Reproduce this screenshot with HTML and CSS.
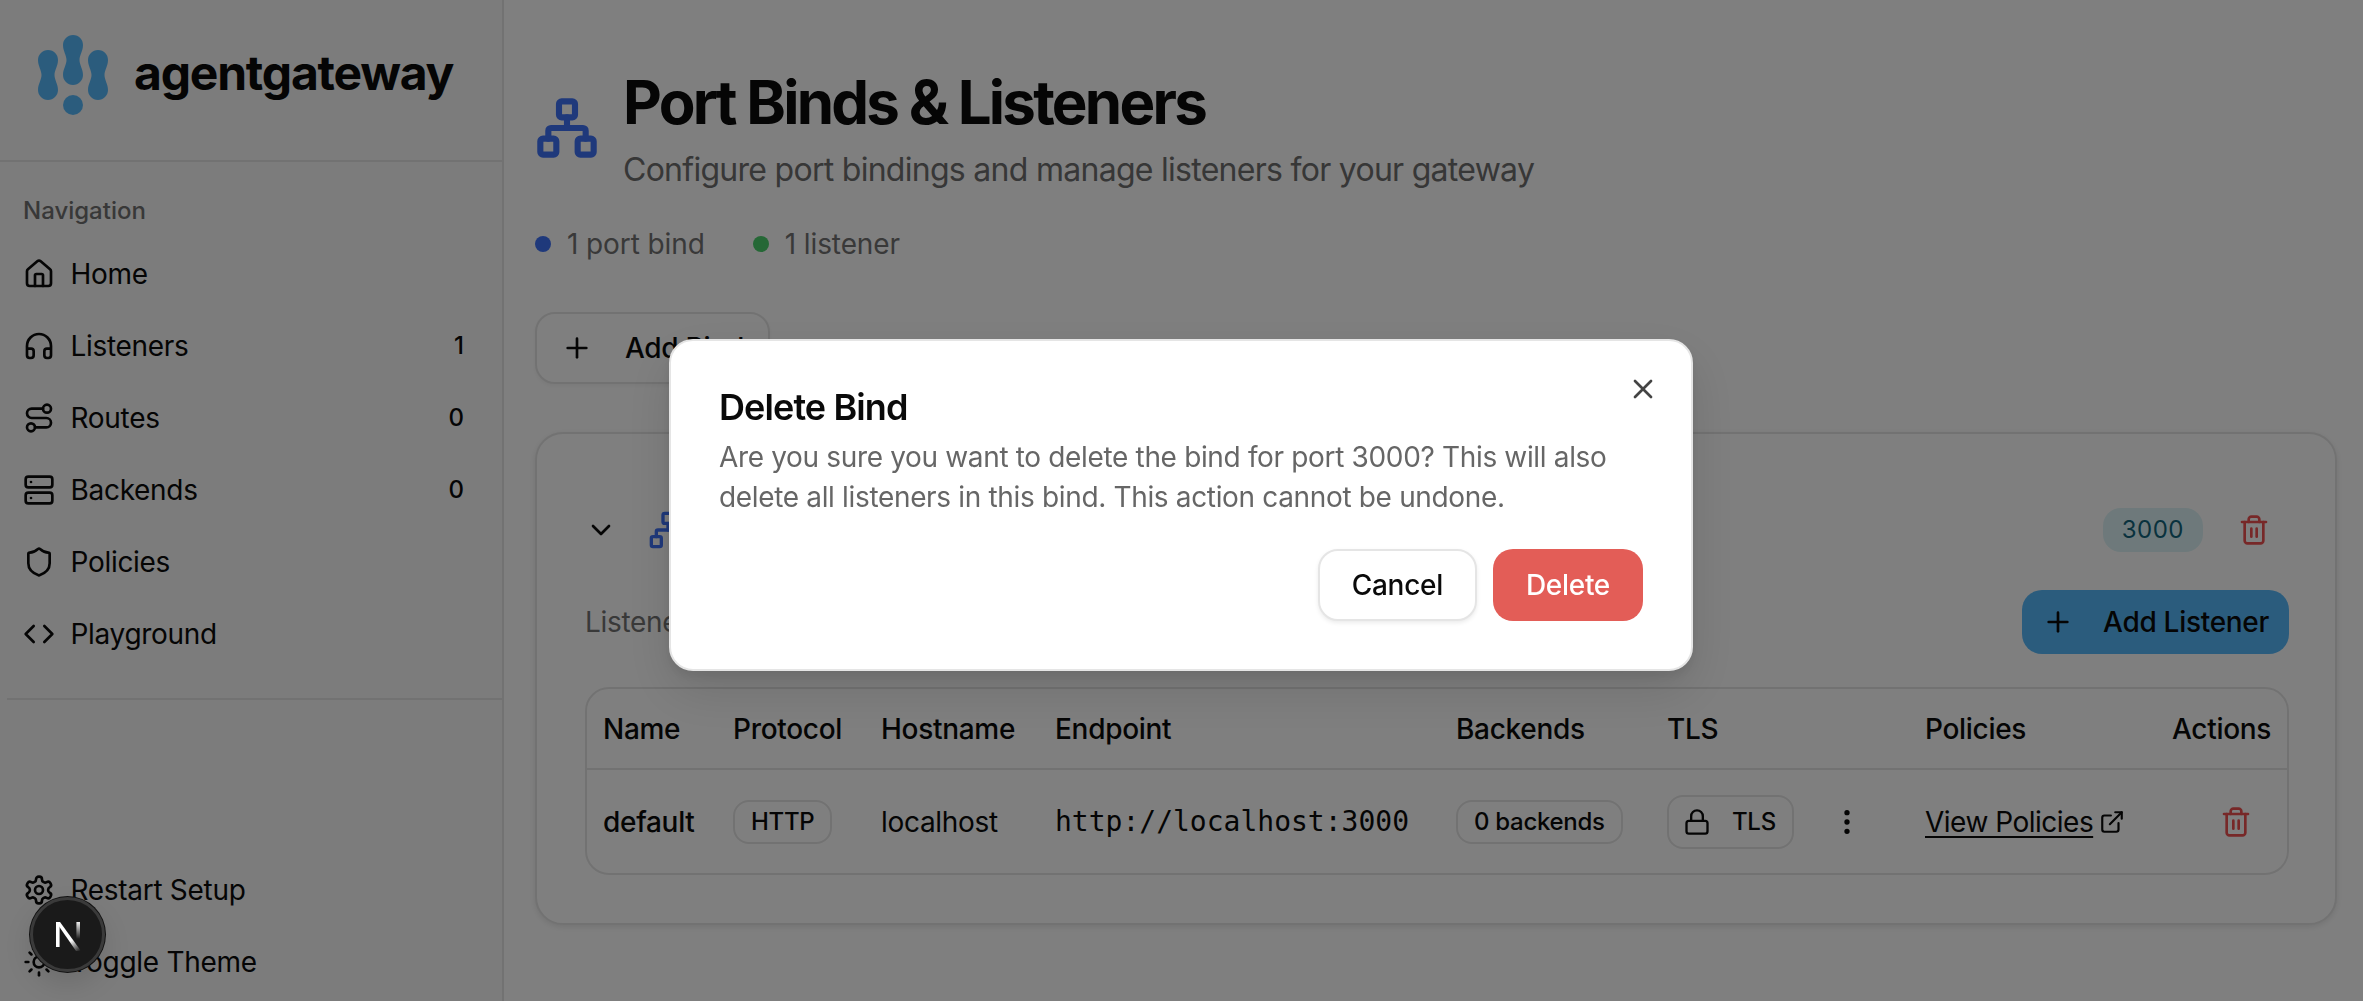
FILE: index.html
```html
<!DOCTYPE html>
<html lang="en">

<head>
  <meta charset="UTF-8">
  <meta name="viewport" content="width=device-width, initial-scale=1.0">
  <title>Port Binds &amp; Listeners</title>
  <link rel="stylesheet" href="styles.css">
</head>

<body>
  <aside class="sidebar">
    <div class="sidebar-header">
      <svg class="logo" viewBox="0 0 70 80" fill="#57b9fb">
        <path d="M10 15C16 15 20 19.500 20 25C20 31 16.500 35 16.500 40C16.500 45 20 49 20 55C20 60.500 15.500 65 10 65C4.500 65 0 60.500 0 55C0 49 3.500 45 3.500 40C3.500 35 0 31 0 25C0 19.500 4.500 15 10 15Z" />
        <path d="M35 0C41 0 45 4.500 45 10C45 16 41.500 20 41.500 25C41.500 30 45 34 45 40C45 45.500 40.500 50 35 50C29.500 50 25 45.500 25 40C25 34 28.500 30 28.500 25C28.500 20 25 16 25 10C25 4.500 29.500 0 35 0Z" />
        <path d="M60 15C66 15 70 19.500 70 25C70 31 66.500 35 66.500 40C66.500 45 70 49 70 55C70 60.500 65.500 65 60 65C54.500 65 50 60.500 50 55C50 49 53.500 45 53.500 40C53.500 35 50 31 50 25C50 19.500 54.500 15 60 15Z" />
        <circle cx="35" cy="70" r="10" />
      </svg>
      <span class="brand">agentgateway</span>
    </div>

    <div class="nav-group">
      <div class="nav-label">Navigation</div>
      <a class="nav-item">
        <svg class="icon" viewBox="0 0 24 24"><path d="M15 21v-8a1 1 0 0 0-1-1h-4a1 1 0 0 0-1 1v8" /><path d="M3 10a2 2 0 0 1 .709-1.528l7-5.999a2 2 0 0 1 2.582 0l7 5.999A2 2 0 0 1 21 10v9a2 2 0 0 1-2 2H5a2 2 0 0 1-2-2z" /></svg>
        <span>Home</span>
      </a>
      <a class="nav-item">
        <svg class="icon" viewBox="0 0 24 24"><path d="M3 14h3a2 2 0 0 1 2 2v3a2 2 0 0 1-2 2H5a2 2 0 0 1-2-2v-7a9 9 0 0 1 18 0v7a2 2 0 0 1-2 2h-1a2 2 0 0 1-2-2v-3a2 2 0 0 1 2-2h3" /></svg>
        <span>Listeners</span>
        <span class="nav-count">1</span>
      </a>
      <a class="nav-item">
        <svg class="icon" viewBox="0 0 24 24"><circle cx="6" cy="19" r="3" /><path d="M9 19h8.500a3.500 3.500 0 0 0 0-7h-11a3.500 3.500 0 0 1 0-7H15" /><circle cx="18" cy="5" r="3" /></svg>
        <span>Routes</span>
        <span class="nav-count">0</span>
      </a>
      <a class="nav-item">
        <svg class="icon" viewBox="0 0 24 24"><rect width="20" height="8" x="2" y="2" rx="2" ry="2" /><rect width="20" height="8" x="2" y="14" rx="2" ry="2" /><line x1="6" x2="6.010" y1="6" y2="6" /><line x1="6" x2="6.010" y1="18" y2="18" /></svg>
        <span>Backends</span>
        <span class="nav-count">0</span>
      </a>
      <a class="nav-item">
        <svg class="icon" viewBox="0 0 24 24"><path d="M20 13c0 5-3.500 7.500-7.660 8.950a1 1 0 0 1-.67-.01C7.500 20.500 4 18 4 13V6a1 1 0 0 1 1-1c2 0 4.500-1.200 6.240-2.720a1.170 1.170 0 0 1 1.520 0C14.510 3.810 17 5 19 5a1 1 0 0 1 1 1z" /></svg>
        <span>Policies</span>
      </a>
      <a class="nav-item">
        <svg class="icon" viewBox="0 0 24 24"><path d="m16 18 6-6-6-6" /><path d="m8 6-6 6 6 6" /></svg>
        <span>Playground</span>
      </a>
    </div>

    <div class="sidebar-rule"></div>

    <div class="sidebar-foot">
      <a class="nav-item">
        <svg class="icon" viewBox="0 0 24 24"><path d="M12.220 2h-.44a2 2 0 0 0-2 2v.18a2 2 0 0 1-1 1.730l-.43.25a2 2 0 0 1-2 0l-.15-.08a2 2 0 0 0-2.730.73l-.22.38a2 2 0 0 0 .73 2.730l.15.1a2 2 0 0 1 1 1.720v.51a2 2 0 0 1-1 1.740l-.15.09a2 2 0 0 0-.73 2.730l.22.38a2 2 0 0 0 2.730.73l.15-.08a2 2 0 0 1 2 0l.43.25a2 2 0 0 1 1 1.730V20a2 2 0 0 0 2 2h.44a2 2 0 0 0 2-2v-.18a2 2 0 0 1 1-1.730l.43-.25a2 2 0 0 1 2 0l.15.08a2 2 0 0 0 2.730-.73l.22-.39a2 2 0 0 0-.73-2.730l-.15-.08a2 2 0 0 1-1-1.740v-.5a2 2 0 0 1 1-1.740l.15-.09a2 2 0 0 0 .73-2.730l-.22-.38a2 2 0 0 0-2.730-.73l-.15.08a2 2 0 0 1-2 0l-.43-.25a2 2 0 0 1-1-1.730V4a2 2 0 0 0-2-2z" /><circle cx="12" cy="12" r="3" /></svg>
        <span>Restart Setup</span>
      </a>
      <a class="nav-item">
        <svg class="icon" viewBox="0 0 24 24"><circle cx="12" cy="12" r="4" /><path d="M12 2v2" /><path d="M12 20v2" /><path d="m4.930 4.930 1.410 1.410" /><path d="m17.660 17.660 1.410 1.410" /><path d="M2 12h2" /><path d="M20 12h2" /><path d="m6.340 17.660-1.410 1.410" /><path d="m19.070 4.930-1.410 1.410" /></svg>
        <span>Toggle Theme</span>
      </a>
    </div>
  </aside>

  <main class="content">
    <header class="page-head">
      <svg class="icon head-icon" viewBox="0 0 24 24"><rect x="16" y="16" width="6" height="6" rx="1" /><rect x="2" y="16" width="6" height="6" rx="1" /><rect x="9" y="2" width="6" height="6" rx="1" /><path d="M5 16v-3a1 1 0 0 1 1-1h12a1 1 0 0 1 1 1v3" /><path d="M12 12V8" /></svg>
      <div>
        <h1>Port Binds &amp; Listeners</h1>
        <p class="page-sub">Configure port bindings and manage listeners for your gateway</p>
      </div>
    </header>

    <div class="stats">
      <div class="stat"><span class="dot dot-blue"></span>1 port bind</div>
      <div class="stat"><span class="dot dot-green"></span>1 listener</div>
    </div>

    <button class="btn btn-outline add-bind">
      <svg class="icon" viewBox="0 0 24 24"><path d="M5 12h14" /><path d="M12 5v14" /></svg>
      Add Bind
    </button>

    <section class="card">
      <div class="card-head">
        <svg class="icon chevron" viewBox="0 0 24 24"><path d="m6 9 6 6 6-6" /></svg>
        <svg class="icon bind-icon" viewBox="0 0 24 24"><rect x="16" y="16" width="6" height="6" rx="1" /><rect x="2" y="16" width="6" height="6" rx="1" /><rect x="9" y="2" width="6" height="6" rx="1" /><path d="M5 16v-3a1 1 0 0 1 1-1h12a1 1 0 0 1 1 1v3" /><path d="M12 12V8" /></svg>
        <span class="port-badge">3000</span>
        <button class="icon-btn">
          <svg class="icon trash" viewBox="0 0 24 24"><path d="M3 6h18" /><path d="M19 6v14c0 1-1 2-2 2H7c-1 0-2-1-2-2V6" /><path d="M8 6V4c0-1 1-2 2-2h4c1 0 2 1 2 2v2" /><line x1="10" x2="10" y1="11" y2="17" /><line x1="14" x2="14" y1="11" y2="17" /></svg>
        </button>
      </div>

      <div class="card-tools">
        <span class="tools-label">Listeners</span>
        <button class="btn btn-primary">
          <svg class="icon" viewBox="0 0 24 24"><path d="M5 12h14" /><path d="M12 5v14" /></svg>
          Add Listener
        </button>
      </div>

      <div class="table-wrap">
        <table>
          <colgroup>
            <col class="col-name">
            <col class="col-protocol">
            <col class="col-host">
            <col class="col-endpoint">
            <col class="col-backends">
            <col class="col-tls">
            <col class="col-policies">
            <col class="col-actions">
          </colgroup>
          <thead>
            <tr>
              <th>Name</th>
              <th>Protocol</th>
              <th>Hostname</th>
              <th>Endpoint</th>
              <th>Backends</th>
              <th>TLS</th>
              <th>Policies</th>
              <th class="align-right">Actions</th>
            </tr>
          </thead>
          <tbody>
            <tr>
              <td class="cell-strong">default</td>
              <td><span class="tag">HTTP</span></td>
              <td>localhost</td>
              <td class="cell-mono">http://localhost:3000</td>
              <td><span class="tag">0 backends</span></td>
              <td>
                <div class="tls-cell">
                  <span class="tag tag-tls">
                    <svg class="icon lock" viewBox="0 0 24 24"><rect width="18" height="11" x="3" y="11" rx="2" ry="2" /><path d="M7 11V7a5 5 0 0 1 10 0v4" /></svg>
                    TLS
                  </span>
                  <svg class="icon kebab" viewBox="0 0 24 24"><circle cx="12" cy="12" r="1" /><circle cx="12" cy="5" r="1" /><circle cx="12" cy="19" r="1" /></svg>
                </div>
              </td>
              <td>
                <a class="policy-link"><span>View Policies</span>
                  <svg class="icon ext" viewBox="0 0 24 24"><path d="M15 3h6v6" /><path d="M10 14 21 3" /><path d="M18 13v6a2 2 0 0 1-2 2H5a2 2 0 0 1-2-2V8a2 2 0 0 1 2-2h6" /></svg>
                </a>
              </td>
              <td class="align-right">
                <button class="icon-btn">
                  <svg class="icon trash" viewBox="0 0 24 24"><path d="M3 6h18" /><path d="M19 6v14c0 1-1 2-2 2H7c-1 0-2-1-2-2V6" /><path d="M8 6V4c0-1 1-2 2-2h4c1 0 2 1 2 2v2" /><line x1="10" x2="10" y1="11" y2="17" /><line x1="14" x2="14" y1="11" y2="17" /></svg>
                </button>
              </td>
            </tr>
          </tbody>
        </table>
      </div>
    </section>
  </main>

  <div class="overlay">
    <div class="modal">
      <svg class="icon modal-close" viewBox="0 0 24 24"><path d="M18 6 6 18" /><path d="m6 6 12 12" /></svg>
      <h2>Delete Bind</h2>
      <p>Are you sure you want to delete the bind for port 3000? This will also delete all listeners in this bind. This action cannot be undone.</p>
      <div class="modal-actions">
        <button class="btn btn-cancel">Cancel</button>
        <button class="btn btn-danger">Delete</button>
      </div>
    </div>
  </div>

  <div class="dev-badge">
    <svg viewBox="0 0 32 32" fill="none">
      <defs>
        <linearGradient id="nFade" x1="12" y1="10" x2="22" y2="24" gradientUnits="userSpaceOnUse">
          <stop offset="0.6" stop-color="#fff" />
          <stop offset="1" stop-color="#fff" stop-opacity="0" />
        </linearGradient>
        <linearGradient id="nBar" x1="21" y1="9" x2="21" y2="18" gradientUnits="userSpaceOnUse">
          <stop offset="0" stop-color="#fff" />
          <stop offset="1" stop-color="#fff" stop-opacity="0" />
        </linearGradient>
      </defs>
      <path d="M10 9.500h1.800V22H10z" fill="#fff" />
      <path d="M10 9.500h2L22.500 24H20z" fill="url(#nFade)" />
      <path d="M20.200 9.500H22V18h-1.800z" fill="url(#nBar)" />
    </svg>
  </div>
</body>

</html>
```

FILE: styles.css
```css
* {
  box-sizing: border-box;
}

html,
body {
  height: 100%;
}

body {
  margin: 0;
  display: flex;
  overflow: hidden;
  background: #fff;
  color: #0a0a0a;
  font-family: Inter, "Noto Sans", sans-serif;
  font-size: 28px;
  line-height: 40px;
  letter-spacing: -0.300px;
}

.icon {
  width: 32px;
  height: 32px;
  flex-shrink: 0;
  fill: none;
  stroke: currentColor;
  stroke-width: 2;
  stroke-linecap: round;
  stroke-linejoin: round;
}

button {
  font: inherit;
  letter-spacing: inherit;
  color: inherit;
  background: none;
  border: 0;
  padding: 0;
}

/* Sidebar */
.sidebar {
  width: 504px;
  height: 100%;
  flex-shrink: 0;
  display: flex;
  flex-direction: column;
  background: #f8f8f8;
  border-right: 2px solid #e5e5e5;
}

.sidebar-header {
  height: 162px;
  flex-shrink: 0;
  display: flex;
  align-items: center;
  gap: 26px;
  padding: 0 0 0 38px;
  border-bottom: 2px solid #e5e5e5;
}

.logo {
  width: 70px;
  height: 80px;
  margin-top: -10px;
}

.brand {
  font-size: 48px;
  line-height: 60px;
  font-weight: 700;
  letter-spacing: -1.200px;
  margin-top: -14px;
}

.nav-group {
  padding-top: 25px;
}

.nav-label {
  height: 48px;
  margin-bottom: 3px;
  padding-left: 23px;
  font-size: 24px;
  line-height: 48px;
  font-weight: 500;
  letter-spacing: 0;
  color: #717171;
}

.nav-item {
  height: 72px;
  display: flex;
  align-items: center;
  gap: 16px;
  padding: 0 38px 0 22.500px;
}

.nav-count {
  margin-left: auto;
  font-size: 24px;
  font-weight: 500;
  letter-spacing: 0;
}

.sidebar-rule {
  height: 2px;
  margin: 28px 0 0 7px;
  background: #e5e5e5;
}

.sidebar-foot {
  margin-top: auto;
  padding-bottom: 3px;
}

/* Page */
.content {
  flex: 1;
  min-width: 0;
  padding: 66px 26px 0 31px;
}

.page-head {
  display: flex;
  align-items: center;
  gap: 24px;
}

.head-icon {
  width: 64px;
  height: 64px;
  color: #3f72f6;
  stroke-width: 2.300;
  margin-top: -4px;
}

h1 {
  margin: 0 0 8px;
  font-size: 60px;
  line-height: 72px;
  font-weight: 700;
  letter-spacing: -2.750px;
}

.page-sub {
  margin: 0;
  font-size: 32px;
  line-height: 48px;
  letter-spacing: -0.720px;
  color: #6e6e6e;
}

.stats {
  display: flex;
  gap: 48px;
  margin-top: 30px;
  color: #737373;
  letter-spacing: -0.100px;
}

.stat {
  display: flex;
  align-items: center;
  gap: 16px;
}

.dot {
  width: 16px;
  height: 16px;
  border-radius: 50%;
}

.dot-blue {
  background: #3f72f6;
}

.dot-green {
  background: #4bd06c;
}

.btn {
  display: inline-flex;
  align-items: center;
  font-weight: 500;
  border-radius: 20px;
}

.btn-outline {
  height: 72px;
  gap: 32px;
  padding: 0 24px;
  background: #fff;
  border: 2px solid #e5e5e5;
  box-shadow: 0 2px 4px rgba(0, 0, 0, 0.05);
}

.add-bind {
  margin-top: 48px;
}

.btn-primary {
  height: 64px;
  gap: 29px;
  padding: 0 20px;
  background: #57b9fb;
  color: #0a0a0a;
}

/* Bind card */
.card {
  margin-top: 48px;
  padding: 48px 46px 48px 48px;
  background: #fff;
  border: 2px solid #e5e5e5;
  border-radius: 28px;
  box-shadow: 0 2px 6px rgba(0, 0, 0, 0.1);
}

.card-head {
  height: 96px;
  display: flex;
  align-items: center;
}

.bind-icon {
  width: 40px;
  height: 40px;
  margin-left: 31px;
  color: #3f72f6;
}

.port-badge {
  margin-left: auto;
  height: 44px;
  padding: 0 19px;
  font-size: 24px;
  line-height: 44px;
  letter-spacing: 0.500px;
  color: #12657c;
  background: #dcf3f6;
  border-radius: 18px;
}

.icon-btn {
  width: 70px;
  height: 64px;
  display: inline-flex;
  align-items: center;
  justify-content: center;
  margin-left: 16px;
  vertical-align: middle;
}

.trash {
  color: #ee5050;
}

.card-tools {
  height: 64px;
  margin-top: 12px;
  display: flex;
  align-items: center;
  justify-content: space-between;
}

.tools-label {
  color: #737373;
}

.table-wrap {
  margin-top: 33px;
  border: 2px solid #e5e5e5;
  border-radius: 24px;
  overflow: hidden;
}

table {
  width: 100%;
  table-layout: fixed;
  border-collapse: collapse;
}

.col-name { width: 130px; }
.col-protocol { width: 148px; }
.col-host { width: 174px; }
.col-endpoint { width: 401px; }
.col-backends { width: 211px; }
.col-tls { width: 258px; }
.col-policies { width: 247px; }

th,
td {
  padding: 0 16px;
  text-align: left;
}

th {
  height: 80px;
  font-weight: 500;
  border-bottom: 2px solid #e5e5e5;
}

td {
  height: 104px;
}

.align-right {
  text-align: right;
}

.cell-strong {
  font-weight: 500;
}

.cell-mono {
  font-family: "DejaVu Sans Mono", monospace;
  font-size: 28px;
  letter-spacing: 0;
}

.tag {
  display: inline-flex;
  align-items: center;
  height: 44px;
  padding: 0 16px;
  font-size: 24px;
  font-weight: 500;
  border: 2px solid #e5e5e5;
  border-radius: 16px;
}

.tag-tls {
  height: 54px;
  gap: 21px;
  padding: 0 16px 0 14px;
}

.lock {
  width: 28px;
  height: 28px;
}

.tls-cell {
  display: flex;
  align-items: center;
  gap: 37px;
}

.policy-link {
  display: inline-flex;
  align-items: center;
  gap: 6px;
}

.policy-link span {
  text-decoration: underline;
  text-underline-offset: 4px;
  letter-spacing: -0.500px;
}

.ext {
  width: 26px;
  height: 26px;
}

.card .table-wrap .icon-btn {
  margin-left: 0;
}

/* Dialog */
.overlay {
  position: fixed;
  inset: 0;
  display: flex;
  align-items: center;
  justify-content: center;
  padding: 9px 1px 0 0;
  background: rgba(0, 0, 0, 0.5);
}

.modal {
  position: relative;
  width: 1024px;
  padding: 48px;
  background: #fff;
  border: 2px solid #e5e5e5;
  border-radius: 24px;
  box-shadow: 0 20px 50px rgba(0, 0, 0, 0.12), 0 6px 12px rgba(0, 0, 0, 0.08);
}

.modal h2 {
  margin: 0 0 12px;
  font-size: 36px;
  line-height: 36px;
  font-weight: 600;
  letter-spacing: -0.900px;
}

.modal p {
  margin: 0 0 32px;
  letter-spacing: -0.340px;
  color: #666;
}

.modal-close {
  position: absolute;
  top: 32px;
  right: 32px;
  color: #444;
}

.modal-actions {
  display: flex;
  justify-content: flex-end;
  gap: 16px;
}

.btn-cancel {
  height: 72px;
  padding: 0 32px;
  background: #fff;
  border: 2px solid #e5e5e5;
  box-shadow: 0 2px 4px rgba(0, 0, 0, 0.08);
}

.btn-danger {
  height: 72px;
  padding: 0 33px;
  background: #e35d57;
  color: #fff;
}

/* Next.js dev indicator */
.dev-badge {
  position: fixed;
  left: 30px;
  bottom: 29px;
  width: 75px;
  height: 75px;
  display: flex;
  align-items: center;
  justify-content: center;
  background: #1a1a1a;
  border: 3px solid #3a3a3a;
  border-radius: 50%;
  box-shadow: 0 0 0 1px #111, 0 12px 28px rgba(0, 0, 0, 0.12);
}

.dev-badge svg {
  width: 64px;
  height: 64px;
  flex-shrink: 0;
}
```
